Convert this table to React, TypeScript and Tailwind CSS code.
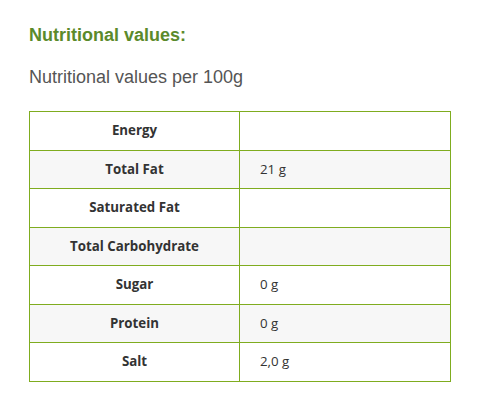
import React from 'react';

const rows: { label: string; value: string }[] = [
  { label: 'Energy', value: '' },
  { label: 'Total Fat', value: '21 g' },
  { label: 'Saturated Fat', value: '' },
  { label: 'Total Carbohydrate', value: '' },
  { label: 'Sugar', value: '0 g' },
  { label: 'Protein', value: '0 g' },
  { label: 'Salt', value: '2,0 g' },
];

const App: React.FC = () => {
  return (
    <div className="w-[488px] h-[405px] bg-white pl-[29px] pt-[25px] font-['Liberation_Sans',Arial,sans-serif]">
      <h2 className="text-[18px] leading-[20px] font-bold text-[#5b8a2b]">Nutritional values:</h2>
      <p className="mt-[22px] text-[18px] leading-[20px] text-[#555555]">Nutritional values per 100g</p>

      <table className="mt-[24px] w-[422px] border-collapse font-['Open_Sans','Noto_Sans',sans-serif] text-[13.3px] text-[#333333]">
        <tbody>
          {rows.map((row, i) => (
            <tr key={row.label} className={i % 2 === 1 ? 'bg-[#f7f7f7]' : 'bg-white'}>
              <td className="w-[210px] h-[38.5px] border border-[#7fac1f] text-center font-bold p-0 pt-px">
                {row.label}
              </td>
              <td className="h-[38.5px] border border-[#7fac1f] pl-[20px] p-0 pt-px">{row.value}</td>
            </tr>
          ))}
        </tbody>
      </table>
    </div>
  );
};

export default App;
